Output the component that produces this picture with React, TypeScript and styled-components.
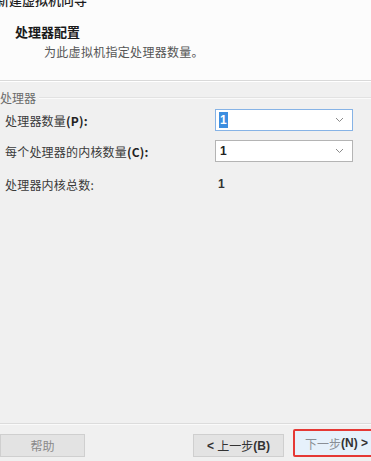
import React from "react";
import styled, { createGlobalStyle } from "styled-components";

const GlobalStyle = createGlobalStyle`
  html, body {
    margin: 0;
    padding: 0;
    background: #f0f0f0;
  }
  * {
    box-sizing: border-box;
  }
`;

const Wizard = styled.div`
  width: 371px;
  height: 461px;
  overflow: hidden;
  display: flex;
  flex-direction: column;
  background: #f0f0f0;
  font-family: "Noto Sans CJK SC", "Liberation Sans", sans-serif;
  font-size: 12px;
  color: #2b2b2b;
`;

const Header = styled.div`
  height: 81px;
  flex-shrink: 0;
  background: #fcfcfc;
  border-bottom: 1px solid #d9d9d9;
  box-shadow: 0 1px 0 #ffffff;
`;

const WindowTitle = styled.div`
  margin: -9px 0 0 -4px;
  font-size: 13px;
  line-height: 17px;
  font-weight: 500;
  color: #1e1e1e;
`;

const Heading = styled.div`
  margin: 16px 0 0 15px;
  font-size: 13px;
  line-height: 16px;
  font-weight: 700;
  color: #1a1a1a;
`;

const Subtitle = styled.div`
  margin: 4px 0 0 44px;
  font-size: 12px;
  line-height: 16px;
  color: #555;
  letter-spacing: 0.3px;
`;

const GroupLegend = styled.div`
  margin-top: 9px;
  height: 14px;
  display: flex;
  align-items: center;
  gap: 3px;
  color: #6a6a6a;
  font-size: 12px;

  &::after {
    content: "";
    flex: 1;
    height: 1px;
    background: #e2e2e2;
    box-shadow: 0 1px 0 #fafafa;
  }
`;

const Fields = styled.div`
  margin-top: 5px;
  display: grid;
  grid-template-columns: 210px 138px;
  grid-template-rows: 22px 22px 26px;
  row-gap: 9px;
  padding-left: 5px;
  align-items: center;
`;

const Label = styled.div`
  color: #3a3a3a;
  letter-spacing: 0.2px;

  b {
    font-weight: 600;
    color: #222;
  }
`;

const Select = styled.div<{ $focused?: boolean }>`
  height: 22px;
  display: flex;
  align-items: center;
  justify-content: space-between;
  padding: 0 8px 0 3px;
  background: #fff;
  border: 1px solid ${(p) => (p.$focused ? "#86b3e6" : "#b4b4b4")};
  font-family: "Liberation Sans", sans-serif;
  font-weight: 700;
  font-size: 12px;
  color: #222;
`;

const Selected = styled.span<{ $highlight?: boolean }>`
  padding: 0 1px;
  line-height: 16px;
  background: ${(p) => (p.$highlight ? "#3d8ee0" : "transparent")};
  color: ${(p) => (p.$highlight ? "#fff" : "#222")};
`;

const Value = styled.div`
  padding-left: 3px;
  font-family: "Liberation Sans", sans-serif;
  font-weight: 700;
  color: #333;
`;

const Spacer = styled.div`
  flex: 1;
`;

const Footer = styled.div`
  height: 38px;
  flex-shrink: 0;
  display: flex;
  align-items: flex-start;
  padding-top: 10px;
  border-top: 1px solid #dcdcdc;
  box-shadow: inset 0 1px 0 #fafafa;
`;

const Button = styled.div<{ $width: number; $muted?: boolean }>`
  width: ${(p) => p.$width}px;
  height: 23px;
  flex-shrink: 0;
  display: flex;
  align-items: center;
  justify-content: center;
  background: #e3e3e3;
  border: 1px solid #cfcfcf;
  color: ${(p) => (p.$muted ? "#8a8a8a" : "#333")};
  font-size: 12px;

  b {
    font-family: "Liberation Sans", sans-serif;
    font-weight: 700;
    color: #333;
  }
`;

const NextButton = styled(Button)`
  margin: -5px -10px 0 9px;
  height: 28px;
  justify-content: flex-start;
  padding-left: 10px;
  background: #e6f1fb;
  border: 2px solid #e53935;
  border-radius: 2px;
  color: #8a8f96;
`;

const Chevron = () => (
  <svg width="9" height="6" viewBox="0 0 9 6">
    <path d="M1 1l3.5 3.5L8 1" fill="none" stroke="#8a8a8a" strokeWidth="1" />
  </svg>
);

const App: React.FC = () => {
  return (
    <Wizard>
      <GlobalStyle />
      <Header>
        <WindowTitle>新建虚拟机向导</WindowTitle>
        <Heading>处理器配置</Heading>
        <Subtitle>为此虚拟机指定处理器数量。</Subtitle>
      </Header>

      <GroupLegend>处理器</GroupLegend>
      <Fields>
        <Label>
          处理器数量<b>(P):</b>
        </Label>
        <Select $focused>
          <Selected $highlight>1</Selected>
          <Chevron />
        </Select>

        <Label>
          每个处理器的内核数量<b>(C):</b>
        </Label>
        <Select>
          <Selected>1</Selected>
          <Chevron />
        </Select>

        <Label>处理器内核总数:</Label>
        <Value>1</Value>
      </Fields>

      <Spacer />

      <Footer>
        <Button $width={85} $muted>
          帮助
        </Button>
        <Spacer />
        <Button $width={91}>
          <b>&lt;&nbsp;</b>上一步<b>(B)</b>
        </Button>
        <NextButton $width={88}>
          下一步<b>(N) &gt;</b>
        </NextButton>
      </Footer>
    </Wizard>
  );
};

export default App;
